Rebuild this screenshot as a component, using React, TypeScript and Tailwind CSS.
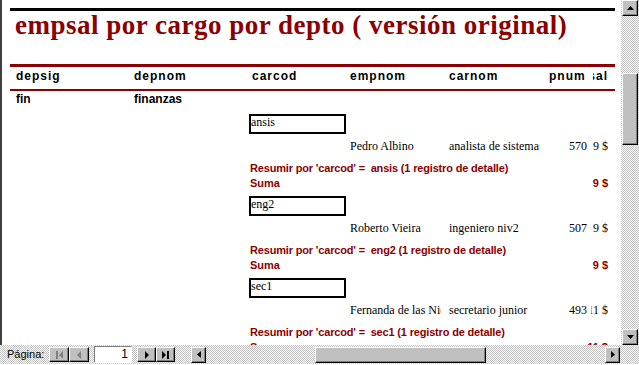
import React from "react"

const checker =
  "bg-[image:repeating-conic-gradient(#c0c0c0_0_25%,#ffffff_0_50%)] bg-[length:2px_2px]"
const raised =
  "bg-[#c0c0c0] border border-t-white border-l-white border-r-black border-b-black shadow-[inset_-1px_-1px_0_#808080] flex items-center justify-center"
const cols = "grid grid-cols-[118px_118px_98px_99px_100px_41px_18px] pl-[6px]"

const groups = [
  { code: "ansis", name: "Pedro Albino", car: "analista de sistema", pnum: "570", sal: "9 $" },
  { code: "eng2", name: "Roberto Vieira", car: "ingeniero niv2", pnum: "507", sal: "9 $" },
  { code: "sec1", name: "Fernanda de las Nieves", car: "secretario junior", pnum: "493", sal: "11 $" },
  { code: "sec2", name: "Marta Suárez", car: "secretario senior", pnum: "468", sal: "12 $" },
]

function Tri({ dir, color = "#000" }: { dir: "up" | "down" | "left" | "right"; color?: string }) {
  const pts = {
    up: "3.5,0 7,4 0,4",
    down: "0,0 7,0 3.5,4",
    left: "4,0 4,7 0,3.5",
    right: "0,0 4,3.5 0,7",
  }[dir]
  const v = dir === "up" || dir === "down"
  return (
    <svg width={v ? 7 : 4} height={v ? 4 : 7} viewBox={v ? "0 0 7 4" : "0 0 4 7"}>
      <polygon points={pts} fill={color} />
    </svg>
  )
}

function NavIcon({ kind, disabled }: { kind: "first" | "prev" | "next" | "last"; disabled?: boolean }) {
  const c = disabled ? "#808080" : "#000"
  return (
    <svg width="9" height="8" viewBox="0 0 9 8">
      {kind === "first" && (
        <>
          <rect x="1" y="0" width="2" height="8" fill={c} />
          <polygon points="8,0 8,8 4,4" fill={c} />
        </>
      )}
      {kind === "prev" && <polygon points="6,0 6,8 2,4" fill={c} />}
      {kind === "next" && <polygon points="3,0 3,8 7,4" fill={c} />}
      {kind === "last" && (
        <>
          <polygon points="1,0 1,8 5,4" fill={c} />
          <rect x="6" y="0" width="2" height="8" fill={c} />
        </>
      )}
    </svg>
  )
}

function Group({ g }: { g: (typeof groups)[number] }) {
  return (
    <div>
      <div className={`${cols} h-[25px]`}>
        <div className="col-start-3 -ml-[3px] w-[97px] h-[20px] border-2 border-black font-['Liberation_Serif',serif] text-[12px] leading-[12px] text-black">
          {g.code}
        </div>
      </div>
      <div className={`${cols} h-[23px] font-['Liberation_Serif',serif] text-[12px] leading-[14px] text-black`}>
        <div className="col-start-4">
          <div className="w-[91px] overflow-hidden whitespace-nowrap">{g.name}</div>
        </div>
        <div className="whitespace-nowrap overflow-hidden">{g.car}</div>
        <div className="text-right pr-[3px]">{g.pnum}</div>
        <div className="ml-[1px] flex justify-end overflow-hidden whitespace-nowrap">{g.sal}</div>
      </div>
      <div className="h-[15px] pl-[240px] text-[11px] leading-[13px] font-bold tracking-[-0.17px] text-[#8b0000] whitespace-pre">
        {`Resumir por 'carcod' =  ${g.code} (1 registro de detalle)`}
      </div>
      <div className="h-[19px] pl-[240px] pr-[7px] flex justify-between text-[11px] leading-[13px] font-bold text-[#8b0000]">
        <span>Suma</span>
        <span>{g.sal}</span>
      </div>
    </div>
  )
}

export default function App() {
  return (
    <div className="w-[639px] h-[365px] flex flex-col overflow-hidden bg-white font-['Liberation_Sans',Arial,sans-serif]">
      <div className="flex h-[345px]">
        <div className="flex-1 border-l-2 border-[#404040] overflow-hidden">
          <div className="ml-[8px] w-[605px] pt-[8px]">
            <div className="h-[3px] bg-black" />
            <div className="h-[53px] pl-[5px] font-['Liberation_Serif',serif] font-bold text-[27px] leading-[28px] tracking-[0.5px] text-[#8b0000] whitespace-nowrap">
              empsal por cargo por depto ( versión original)
            </div>
            <div className="h-[3px] bg-[#8b0000]" />
            <div className={`${cols} h-[22px] pt-[2px] text-[12px] leading-[14px] font-bold tracking-[1px] text-black`}>
              <div>depsig</div>
              <div>depnom</div>
              <div>carcod</div>
              <div>empnom</div>
              <div>carnom</div>
              <div>pnum</div>
              <div className="ml-[3px] flex justify-end overflow-hidden">sal</div>
            </div>
            <div className="h-[2px] bg-[#8b0000]" />
            <div className={`${cols} h-[23px] pt-[1px] text-[12px] leading-[14px] font-bold text-black`}>
              <div>fin</div>
              <div>finanzas</div>
            </div>
            {groups.map((g) => (
              <Group key={g.code} g={g} />
            ))}
          </div>
        </div>
        <div className={`w-[18px] flex flex-col ${checker}`}>
          <div className={`${raised} w-[16px] h-[16px] ml-[1px]`}>
            <Tri dir="up" />
          </div>
          <div className="h-[57px]" />
          <div className={`${raised} w-[16px] h-[72px] ml-[1px]`} />
          <div className="flex-1" />
          <div className={`${raised} w-[16px] h-[16px] ml-[1px]`}>
            <Tri dir="down" />
          </div>
        </div>
      </div>
      <div className={`h-[20px] flex items-center ${checker} border-b border-white`}>
        <span className="w-[49px] pl-[7px] text-[11px] leading-[13px] text-black">Página:</span>
        <div className={`${raised} w-[20px] h-[15px]`}>
          <NavIcon kind="first" disabled />
        </div>
        <div className={`${raised} w-[20px] h-[15px]`}>
          <NavIcon kind="prev" disabled />
        </div>
        <div className="ml-[5px] w-[38px] h-[17px] bg-white border border-t-[#808080] border-l-[#808080] border-r-white border-b-white text-right pr-[3px] text-[12px] leading-[15px] text-black">
          1
        </div>
        <div className={`${raised} w-[19px] h-[15px] ml-[5px]`}>
          <NavIcon kind="next" />
        </div>
        <div className={`${raised} w-[19px] h-[15px]`}>
          <NavIcon kind="last" />
        </div>
        <div className="ml-[16px] w-[429px] h-[16px] flex">
          <div className={`${raised} w-[15px] h-[16px]`}>
            <Tri dir="left" />
          </div>
          <div className="w-[109px]" />
          <div className={`${raised} w-[171px] h-[16px]`} />
          <div className="flex-1" />
          <div className={`${raised} w-[15px] h-[16px]`}>
            <Tri dir="right" />
          </div>
        </div>
      </div>
    </div>
  )
}
